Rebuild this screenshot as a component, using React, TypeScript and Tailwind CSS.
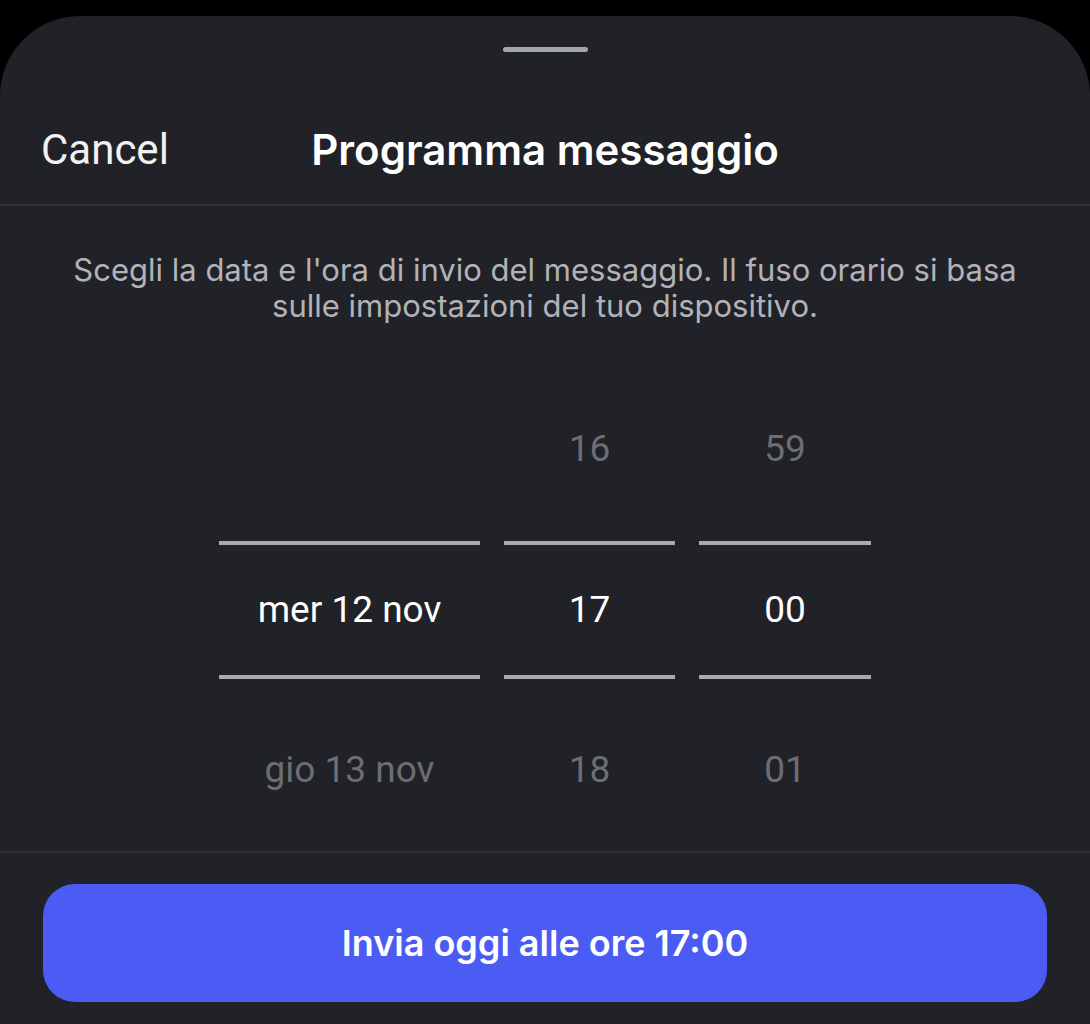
import React from "react"

const columns = [
  { width: "w-[261px]", prev: "", current: "mer 12 nov", next: "gio 13 nov" },
  { width: "w-[171px]", prev: "16", current: "17", next: "18" },
  { width: "w-[172px]", prev: "59", current: "00", next: "01" },
]

function PickerColumn({ width, prev, current, next }: { width: string; prev: string; current: string; next: string }) {
  return (
    <div className={`${width} flex flex-col items-center font-['Roboto',sans-serif]`}>
      {/* previous value */}
      <div className="h-[217px] w-full flex items-start justify-center pt-[101px]">
        <span className="text-[37px] leading-[48px] text-[#6c6e73]">{prev}</span>
      </div>
      <div className="h-[4px] w-full bg-[#a9aaae]" />
      {/* selected value */}
      <div className="h-[130px] w-full flex items-center justify-center">
        <span className="text-[37px] leading-[48px] text-white">{current}</span>
      </div>
      <div className="h-[4px] w-full bg-[#a9aaae]" />
      {/* next value */}
      <div className="h-[172px] w-full flex items-start justify-center pt-[67px]">
        <span className="text-[37px] leading-[48px] text-[#6c6e73]">{next}</span>
      </div>
    </div>
  )
}

export default function App() {
  return (
    <div className="w-full h-[1024px] bg-black pt-[16px] overflow-hidden">
      <div className="h-full bg-[#212227] rounded-t-[80px] flex flex-col font-['Inter',sans-serif]">
        {/* Drag handle */}
        <div className="mt-[31px] mx-auto w-[85px] h-[5px] rounded-full bg-[#a3a6ae]" />

        {/* Header */}
        <div className="h-[152px] pt-[44px] grid grid-cols-[1fr_auto_1fr] items-center px-[41px]">
          <span className="text-[42px] leading-[52px] text-[#f2f2f2] font-['Roboto',sans-serif]">Cancel</span>
          <h1 className="text-[42px] leading-[52px] font-semibold text-white">Programma messaggio</h1>
          <span />
        </div>
        <div className="h-[2px] bg-[#303136]" />

        {/* Description */}
        <p className="pt-[46px] px-[40px] text-center text-[31px] leading-[36px] text-[#b1b3b9]">
          Scegli la data e l'ora di invio del messaggio. Il fuso orario si basa
          <br />
          sulle impostazioni del tuo dispositivo.
        </p>

        {/* Picker */}
        <div className="flex justify-center gap-6">
          {columns.map((c) => (
            <PickerColumn key={c.current} {...c} />
          ))}
        </div>

        <div className="h-[2px] bg-[#2c2d32]" />

        {/* Action */}
        <div className="px-[43px] pt-[31px]">
          <button className="w-full h-[118px] rounded-[32px] bg-[#4b5cf5] text-white text-[36px] font-semibold">
            Invia oggi alle ore 17:00
          </button>
        </div>
      </div>
    </div>
  )
}
